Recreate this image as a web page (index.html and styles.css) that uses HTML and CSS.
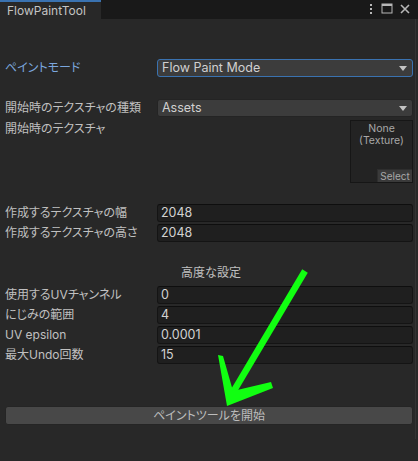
FILE: index.html
```html
<!DOCTYPE html>
<html>
<head>
<meta charset="utf-8">
<link rel="stylesheet" href="styles.css">
</head>
<body>
<div class="window">
  <div class="tabbar">
    <div class="tab">FlowPaintTool</div>
    <div class="tab-icons">
      <svg width="6" height="12" viewBox="0 0 6 12"><rect x="2" y="1" width="2" height="2" fill="#b8b8b8"/><rect x="2" y="5" width="2" height="2" fill="#b8b8b8"/><rect x="2" y="9" width="2" height="2" fill="#b8b8b8"/></svg>
      <svg width="12" height="11" viewBox="0 0 12 11"><rect x="1" y="1" width="10" height="9" fill="none" stroke="#b8b8b8" stroke-width="1"/><rect x="1" y="1" width="10" height="2" fill="#b8b8b8"/></svg>
      <svg width="10" height="10" viewBox="0 0 10 10"><path d="M1 1 L9 9 M9 1 L1 9" stroke="#b8b8b8" stroke-width="1.6"/></svg>
    </div>
  </div>
  <div class="content">
    <div class="row mode-row">
      <div class="label focused">ペイントモード</div>
      <div class="popup focus">Flow Paint Mode<span class="caret"></span></div>
    </div>
    <div class="row first-tex">
      <div class="label">開始時のテクスチャの種類</div>
      <div class="popup">Assets<span class="caret"></span></div>
    </div>
    <div class="row tex-row">
      <div class="label">開始時のテクスチャ</div>
      <div class="texbox">
        <div class="tex-none">None<br>(Texture)</div>
        <div class="tex-select">Select</div>
      </div>
    </div>
    <div class="row size-first">
      <div class="label">作成するテクスチャの幅</div>
      <div class="field">2048</div>
    </div>
    <div class="row">
      <div class="label">作成するテクスチャの高さ</div>
      <div class="field">2048</div>
    </div>
    <div class="heading">高度な設定</div>
    <div class="row">
      <div class="label">使用するUVチャンネル</div>
      <div class="field">0</div>
    </div>
    <div class="row">
      <div class="label">にじみの範囲</div>
      <div class="field">4</div>
    </div>
    <div class="row">
      <div class="label">UV epsilon</div>
      <div class="field">0.0001</div>
    </div>
    <div class="row">
      <div class="label">最大Undo回数</div>
      <div class="field">15</div>
    </div>
    <div class="button">ペイントツールを開始</div>
  </div>
  <div class="edge"></div>
  <svg class="arrow" width="418" height="461" viewBox="0 0 418 461">
    <line x1="305" y1="271" x2="232" y2="394" stroke="#11ff11" stroke-width="6.5"/>
    <polygon points="218,355 223,356 233,391 271,382 273,388 227,406" fill="#11ff11"/>
  </svg>
</div>
</body>
</html>
```
FILE: styles.css
```css
html, body {
  margin: 0;
  padding: 0;
  background: #282828;
}
body {
  font-family: "Inter", "Noto Sans CJK JP", sans-serif;
  font-size: 12px;
  color: #c0c0c0;
  font-feature-settings: "palt";
}
.window {
  position: relative;
  width: 418px;
  height: 461px;
  overflow: hidden;
}
.tabbar {
  height: 19px;
  background: #191919;
  display: flex;
  align-items: stretch;
  justify-content: space-between;
}
.tab {
  width: 94px;
  padding-left: 7px;
  border-top: 2px solid #3a72b0;
  background: #282828;
  color: #c4c4c4;
  font-size: 12px;
  line-height: 17px;
}
.tab-icons {
  display: flex;
  align-items: center;
  gap: 7px;
  padding-right: 8px;
  padding-bottom: 2px;
}
.content {
  padding: 40px 5px 0 5px;
  display: flex;
  flex-direction: column;
  gap: 2px;
}
.row {
  display: flex;
  align-items: flex-start;
  min-height: 18px;
}
.label {
  width: 152px;
  flex: none;
  line-height: 18px;
  white-space: nowrap;
}
.label.focused {
  color: #7ba6de;
}
.popup {
  flex: 1;
  height: 16px;
  line-height: 16px;
  background: #3c3c3c;
  border: 1px solid #242424;
  border-radius: 3px;
  padding-left: 4px;
  position: relative;
  color: #d0d0d0;
  font-size: 12.5px;
}
.popup.focus {
  border-color: #3a72b0;
}
.caret {
  position: absolute;
  right: 5px;
  top: 6px;
  width: 0;
  height: 0;
  border-left: 4px solid transparent;
  border-right: 4px solid transparent;
  border-top: 5px solid #c4c4c4;
}
.first-tex {
  margin-top: 20px;
}
.tex-row {
  margin-top: 1px;
}
.texbox {
  margin-left: auto;
  width: 61px;
  height: 61px;
  background: #232323;
  border: 1px solid #161616;
  position: relative;
  display: flex;
  flex-direction: column;
  align-items: center;
}
.tex-none {
  text-align: center;
  font-size: 10.5px;
  line-height: 12px;
  color: #a8a8a8;
  margin-top: 2px;
}
.tex-select {
  position: absolute;
  right: 0;
  bottom: 0;
  width: 34px;
  height: 12px;
  background: #3a3a3a;
  border-top: 1px solid #2e2e2e;
  border-left: 1px solid #2e2e2e;
  font-size: 10px;
  line-height: 12px;
  color: #a8a8a8;
  text-align: center;
}
.size-first {
  margin-top: 19px;
}
.field {
  flex: 1;
  height: 16px;
  line-height: 16px;
  background: #1f1f1f;
  border: 1px solid #141414;
  border-top-color: #0e0e0e;
  border-radius: 3px;
  padding-left: 3px;
  color: #d2d2d2;
  font-size: 12.5px;
}
.heading {
  text-align: center;
  margin-top: 20px;
  margin-bottom: 2px;
  line-height: 18px;
  padding-left: 4px;
}
.button {
  margin-top: 40px;
  height: 17px;
  line-height: 17px;
  background: #484848;
  border: 1px solid #252525;
  border-radius: 3px;
  text-align: center;
  color: #bdbdbd;
}
.edge {
  position: absolute;
  right: 2px;
  top: 19px;
  width: 1px;
  height: 420px;
  background: #333333;
}
.arrow {
  position: absolute;
  left: 0;
  top: 0;
  pointer-events: none;
}
```
